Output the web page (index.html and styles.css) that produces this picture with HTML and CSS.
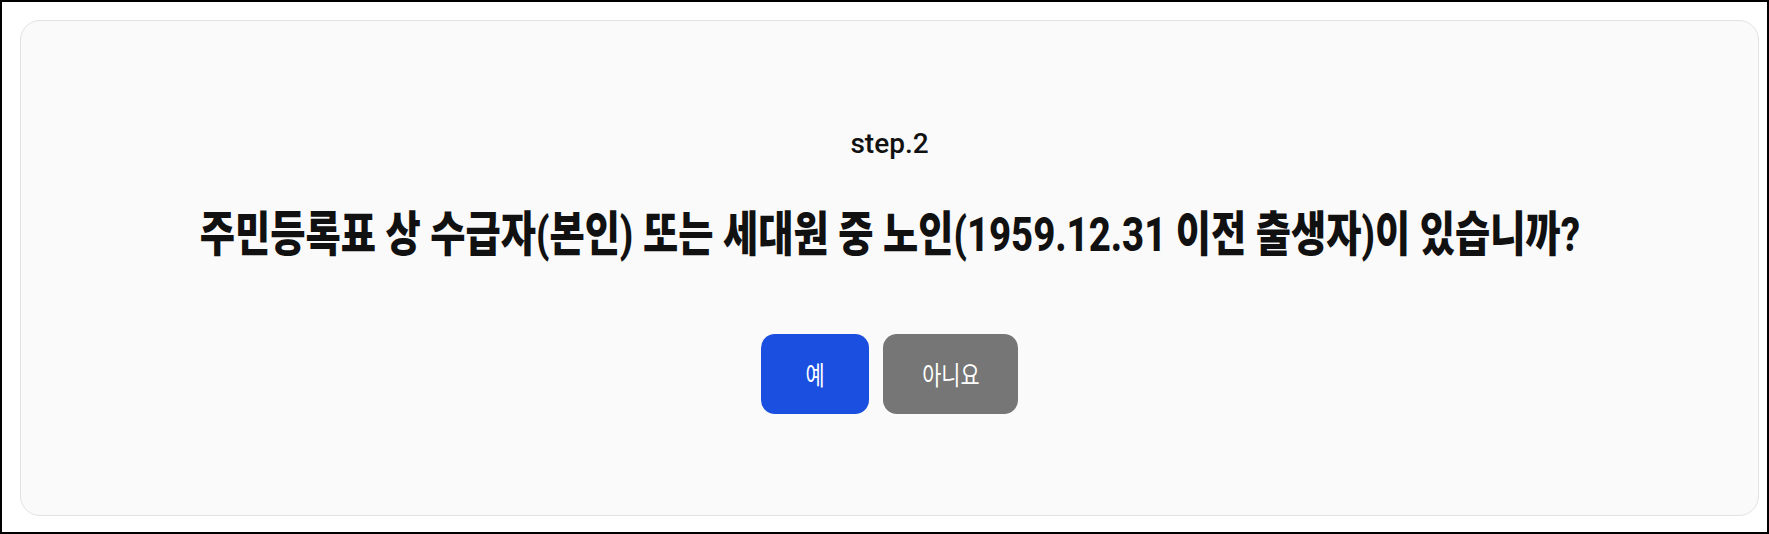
FILE: index.html
```html
<!DOCTYPE html>
<html lang="ko">
<head>
	<meta charset="UTF-8">
	<meta name="viewport" content="width=device-width">
	<title>step.2</title>
	<link rel="stylesheet" href="styles.css">
</head>
<body>
<div class="frame">
	<div class="card">
		<p class="step">step.2</p>
		<h1 class="question"><span>주민등록표 상 수급자(본인) 또는 세대원 중 노인(1959.12.31 이전 출생자)이 있습니까?</span></h1>
		<div class="choices">
			<button class="yes"><span>예</span></button>
			<button class="no"><span>아니요</span></button>
		</div>
	</div>
</div>
</body>
</html>
```
FILE: styles.css
```css
html, body {
	margin: 0;
	height: 100%;
	background: #fff;
}

body {
	font-family: Roboto, "Noto Sans CJK KR", sans-serif;
	color: #111;
}

.frame {
	height: 534px;
	box-sizing: border-box;
	border: 2px solid #000;
	padding: 18px 8px 16px 18px;
}

.card {
	height: 100%;
	box-sizing: border-box;
	border: 1px solid #e2e2e2;
	border-radius: 20px;
	background: #fafafa;
	display: flex;
	flex-direction: column;
	align-items: center;
	padding-top: 106px;
}

.step {
	margin: 0;
	font-size: 28px;
	font-weight: 500;
}

.question {
	margin: 46px 0 0;
	font-size: 48px;
	font-weight: 800;
	line-height: 1.2;
	white-space: nowrap;
}

.question span {
	display: inline-block;
	transform: scaleX(0.798);
}

.choices {
	display: flex;
	gap: 14px;
	margin-top: 70px;
}

button {
	height: 80px;
	border: 0;
	border-radius: 14px;
	color: #fff;
	font-family: Roboto, "Noto Sans CJK KR", sans-serif;
	font-size: 26px;
	cursor: pointer;
}

button span {
	display: inline-block;
	transform: scaleX(0.8);
}

.yes {
	width: 108px;
	background: #1b4fe0;
}

.no {
	width: 135px;
	background: #767676;
}
```
